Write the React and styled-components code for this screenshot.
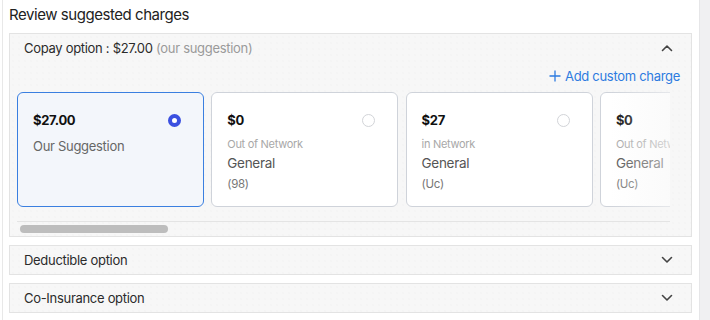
import React from "react";
import styled, { createGlobalStyle } from "styled-components";

const Global = createGlobalStyle`
  html, body { margin: 0; padding: 0; background: #ffffff; }
  body { font-family: Inter, "Noto Sans", sans-serif; color: #222; -webkit-font-smoothing: antialiased; letter-spacing: -0.3px; }
  * { box-sizing: border-box; }
`;

const Page = styled.div`
  display: flex;
  width: 710px;
  height: 320px;
  overflow: hidden;
`;

const Main = styled.div`
  flex: 1;
  min-width: 0;
  margin-left: 2px;
  border-left: 1px solid #e8e8e8;
  padding: 0 7px 0 6px;
  display: flex;
  flex-direction: column;
`;

const ScrollRail = styled.div`
  flex: 0 0 11px;
  background: #f0f0f2;
  border-left: 1px solid #e6e6e8;
`;

const Title = styled.h2`
  margin: 0;
  padding-top: 5px;
  font-size: 15px;
  line-height: 20px;
  font-weight: 400;
  color: #222;
  letter-spacing: -0.45px;
`;

const Panel = styled.section`
  margin-top: ${(p) => p.$mt}px;
  min-width: 0;
  border: 1px solid #e3e3e3;
  background-color: #f7f7f7;
  background-image: radial-gradient(#f0f0f0 0.6px, transparent 0.8px);
  background-size: 6px 6px;
`;

const PanelHeader = styled.div`
  height: ${(p) => p.$h}px;
  display: flex;
  align-items: center;
  justify-content: space-between;
  padding: 0 18px 0 14px;
  font-size: 13px;
  color: #2b2b2b;
`;

const Muted = styled.span`
  color: #9a9a9a;
`;

const Chevron = ({ up }) => (
  <svg width="12" height="8" viewBox="0 0 12 8" fill="none">
    <path
      d={up ? "M1.5 6.5 L6 2 L10.5 6.5" : "M1.5 1.5 L6 6 L10.5 1.5"}
      stroke="#444"
      strokeWidth="1.6"
      strokeLinecap="round"
      strokeLinejoin="round"
    />
  </svg>
);

const AddRow = styled.div`
  display: flex;
  justify-content: flex-end;
  padding: 0 11px 0 0;
  height: 28px;
  align-items: center;
`;

const AddLink = styled.a`
  display: inline-flex;
  align-items: center;
  gap: 4px;
  color: #2d7be0;
  font-size: 13px;
  cursor: pointer;
`;

const Body = styled.div`
  padding: 2px 21px 0 7px;
  min-width: 0;
`;

const CardScroller = styled.div`
  position: relative;
  overflow: hidden;
  padding-bottom: 14px;
`;

const CardRow = styled.div`
  display: flex;
  gap: 7.3px;
`;

const Fade = styled.div`
  position: absolute;
  top: 0;
  right: 0;
  bottom: 14px;
  width: 60px;
  background: linear-gradient(to right, rgba(247, 247, 247, 0), rgba(247, 247, 247, 0.55));
  pointer-events: none;
`;

const Card = styled.div`
  flex: 0 0 187px;
  height: 115px;
  border-radius: 6px;
  border: 1px solid ${(p) => (p.$selected ? "#3a7fe0" : "#cfd3da")};
  background: ${(p) => (p.$selected ? "#f3f6fb" : "#ffffff")};
  padding: 18px 22px 0 15px;
  display: flex;
  flex-direction: column;
`;

const CardTop = styled.div`
  display: flex;
  align-items: center;
  justify-content: space-between;
  height: 18px;
`;

const Amount = styled.div`
  font-size: 13px;
  font-weight: 700;
  color: #111;
`;

const Radio = styled.span`
  width: 13px;
  height: 13px;
  border-radius: 50%;
  border: ${(p) => (p.$checked ? "4px solid #3b50e0" : "1.5px solid #d2d4d8")};
  background: #fff;
`;

const Suggestion = styled.div`
  margin-top: 8px;
  font-size: 13px;
  line-height: 18px;
  color: #666;
`;

const Network = styled.div`
  margin-top: 8px;
  font-size: 11px;
  line-height: 14px;
  color: #a8a8a8;
`;

const Category = styled.div`
  margin-top: 3px;
  font-size: 13.5px;
  line-height: 18px;
  color: #555;
`;

const Code = styled.div`
  margin-top: 4px;
  font-size: 11.5px;
  line-height: 16px;
  color: #777;
`;

const Track = styled.div`
  border-top: 1px solid #e4e4e4;
  height: 15px;
  padding: 3px 0 0 3px;
`;

const Thumb = styled.div`
  width: 148px;
  height: 8px;
  border-radius: 4px;
  background: #bdbdbd;
`;

const options = [
  { amount: "$0", network: "Out of Network", cat: "General", code: "(98)" },
  { amount: "$27", network: "in Network", cat: "General", code: "(Uc)" },
  { amount: "$0", network: "Out of Network", cat: "General", code: "(Uc)" },
];

export default function App() {
  return (
    <Page>
      <Global />
      <Main>
        <Title>Review suggested charges</Title>
        <Panel $mt={8}>
          <PanelHeader $h={28}>
            <span>
              Copay option : $27.00 <Muted>(our suggestion)</Muted>
            </span>
            <Chevron up />
          </PanelHeader>
          <AddRow>
            <AddLink>
              <svg width="12" height="12" viewBox="0 0 12 12">
                <path d="M6 0.5 V11.5 M0.5 6 H11.5" stroke="#2d7be0" strokeWidth="1.3" />
              </svg>
              Add custom charge
            </AddLink>
          </AddRow>
          <Body>
            <CardScroller>
              <CardRow>
                <Card $selected>
                  <CardTop>
                    <Amount>$27.00</Amount>
                    <Radio $checked />
                  </CardTop>
                  <Suggestion>Our Suggestion</Suggestion>
                </Card>
                {options.map((o, i) => (
                  <Card key={i}>
                    <CardTop>
                      <Amount>{o.amount}</Amount>
                      <Radio />
                    </CardTop>
                    <Network>{o.network}</Network>
                    <Category>{o.cat}</Category>
                    <Code>{o.code}</Code>
                  </Card>
                ))}
              </CardRow>
              <Fade />
            </CardScroller>
            <Track>
              <Thumb />
            </Track>
          </Body>
        </Panel>
        <Panel $mt={8}>
          <PanelHeader $h={28}>
            <span>Deductible option</span>
            <Chevron />
          </PanelHeader>
        </Panel>
        <Panel $mt={8}>
          <PanelHeader $h={28}>
            <span>Co-Insurance option</span>
            <Chevron />
          </PanelHeader>
        </Panel>
      </Main>
      <ScrollRail />
    </Page>
  );
}
